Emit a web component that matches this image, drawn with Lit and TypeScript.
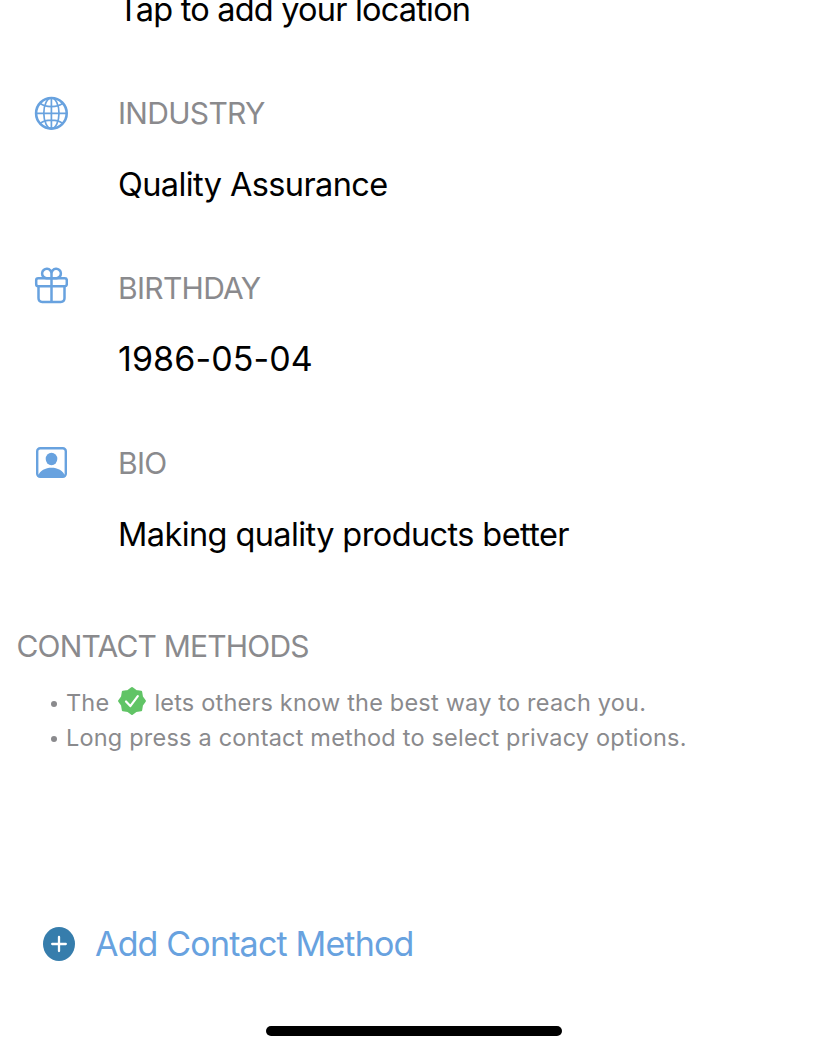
import { LitElement, html, css } from "lit";
import { customElement } from "lit/decorators.js";

const globe = html`<svg class="icon" width="34" height="34" viewBox="0 0 34 34" fill="none" stroke="#68a2df" stroke-width="1.7">
  <circle cx="17.4" cy="17.3" r="15.3" stroke-width="2.6"/><ellipse cx="17.4" cy="17.3" rx="7.6" ry="15.3"/>
  <path d="M17.4 2v30M2 17.3h30M6.2 7.3C11.4 11.6 23.4 11.6 28.6 7.3M6.2 27.3C11.4 23 23.4 23 28.6 27.3"/></svg>`;
const gift = html`<svg class="icon" width="34" height="37" viewBox="0 0 34 37" fill="none" stroke="#68a2df" stroke-width="2.5" stroke-linejoin="round">
  <rect x="2.2" y="11.200" width="30.600" height="8" rx="2"/><path d="M4.500 19.200V31q0 3.900 3.700 3.900h18.600q3.700 0 3.700-3.900V19.200M17.500 11.200V34.900"/>
  <path d="M17.500 11.200V6.800a4.700 4.700 0 1 0-4.900 4.400zM17.500 11.200V6.800a4.700 4.700 0 1 1 4.900 4.400z"/></svg>`;
const person = html`<svg class="icon" width="34" height="34" viewBox="0 0 34 34"><rect x="3.200" y="2.200" width="28.600" height="28.600" rx="3" fill="none" stroke="#68a2df" stroke-width="2.400"/>
  <ellipse cx="17.500" cy="13" rx="5.800" ry="6.200" fill="#68a2df"/><path d="M3.500 30.500C6 24.300 11.500 21.700 17.500 21.700S29 24.300 31.500 30.500z" fill="#68a2df"/></svg>`;

const badgePoints = Array.from({ length: 16 }, (_, i) => {
  const r = i % 2 ? 10.6 : 12.7;
  const a = (i * Math.PI) / 8;
  return `${14 + r * Math.sin(a)},${14 - r * Math.cos(a)}`;
}).join(" ");

const fields = [
  { label: "INDUSTRY", value: "Quality Assurance", icon: globe, kind: "industry" },
  { label: "BIRTHDAY", value: "1986-05-04", icon: gift, kind: "birthday" },
  { label: "BIO", value: "Making quality products better", icon: person, kind: "bio" },
];

@customElement("app-root")
export class AppRoot extends LitElement {
  static styles = css`
    :host { display: block; height: 1052px; overflow: hidden; background: #fff; color: #000; font-family: Inter, "Liberation Sans", sans-serif; }
    .page { height: 1052px; display: flex; flex-direction: column; white-space: nowrap; }
    .location { margin: -10px 0 0 118px; height: 86px; letter-spacing: -0.8px; }
    .value, .location { font-size: 32.5px; line-height: 40px; }
    .value { letter-spacing: -0.6px; }
    .birthday .value { font-size: 34px; letter-spacing: 0.1px; }
    .field { display: grid; grid-template-columns: 118px 1fr; height: 175px; flex: none; }
    .mark { padding: 20px 0 0 34px; }
    .birthday .mark { padding-top: 16px; }
    .icon { display: block; }
    .copy { display: flex; flex-direction: column; gap: 32px; padding-top: 17px; }
    .birthday .copy { gap: 31px; }
    .label, .heading { font-size: 30px; line-height: 40px; color: #8a8a8d; letter-spacing: -0.7px; }
    .heading { margin: 25px 0 0 16.5px; font-weight: 400; letter-spacing: -0.8px; }
    .tips { list-style: none; margin: 19px 0 0 50px; padding: 0; font-size: 23.5px; line-height: 35px; color: #8a8a8d; letter-spacing: 0.2px; }
    .tip { display: flex; align-items: center; height: 35px; }
    .dot { width: 6px; height: 6px; border-radius: 50%; background: #8a8a8d; margin: 2px 9.500px 0 0.500px; }
    .badge { margin: -3px 8px 0 9px; }
    .add { display: flex; align-items: center; gap: 20px; margin: 169px 0 0 43px; height: 40px; color: #68a2df; font-size: 34px; letter-spacing: -0.83px; }
    .add span { line-height: 40px; }
    .home { width: 296px; height: 10px; border-radius: 5px; background: #000; margin: 62px 0 0 266px; }
  `;
  render() {
    return html`<main class="page">
      <div class="location"><span>Tap to add your location</span></div>
      ${fields.map((f) => html`<section class="field ${f.kind}">
        <div class="mark">${f.icon}</div>
        <div class="copy"><div class="label">${f.label}</div><div class="value">${f.value}</div></div>
      </section>`)}
      <h2 class="heading">CONTACT METHODS</h2>
      <ul class="tips">
        <li class="tip"><i class="dot"></i><span>The</span>
          <svg class="badge" width="28" height="28" viewBox="0 0 28 28"><polygon points=${badgePoints} fill="#61c466" stroke="#61c466" stroke-width="2.400" stroke-linejoin="round"/><path d="M8 14.500l4.300 4.600 7.500-10" fill="none" stroke="#fff" stroke-width="2.200" stroke-linecap="round" stroke-linejoin="round"/></svg>
          <span>lets others know the best way to reach you.</span></li>
        <li class="tip"><i class="dot"></i><span>Long press a contact method to select privacy options.</span></li>
      </ul>
      <div class="add"><svg width="32" height="34" viewBox="0 0 32 34"><ellipse cx="16" cy="17" rx="16" ry="17" fill="#367dac"/><path d="M9.200 17h13.600M16 9.900v14.200" stroke="#fff" stroke-width="2.300" stroke-linecap="round"/></svg><span>Add Contact Method</span></div>
      <div class="home"></div>
    </main>`;
  }
}
